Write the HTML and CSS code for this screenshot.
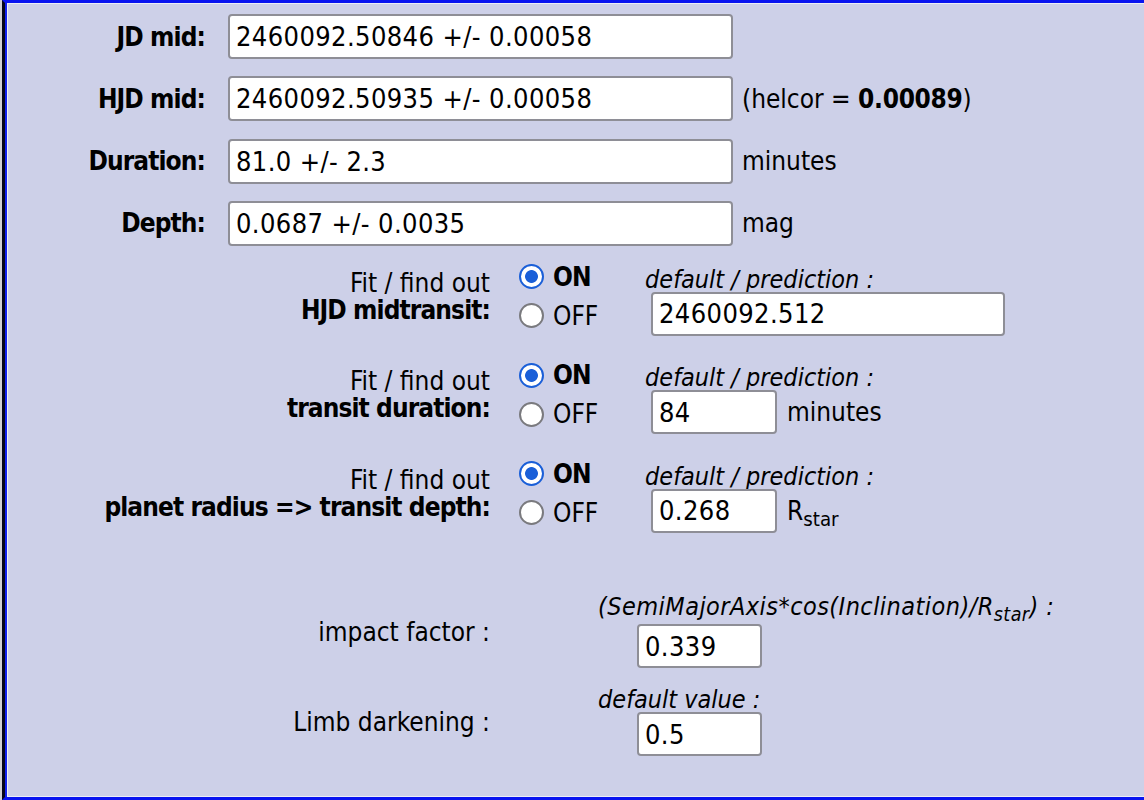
FILE: index.html
```html
<!DOCTYPE html>
<html>
<head>
<meta charset="utf-8">
<title>Transit fit</title>
<link rel="stylesheet" href="styles.css">
</head>
<body>
<div class="frame">
  <div class="main-grid">
    <label class="lbl">JD mid:</label>
    <input class="inp wide" value="2460092.50846 +/- 0.00058">
    <span class="unit"></span>

    <label class="lbl">HJD mid:</label>
    <input class="inp wide" value="2460092.50935 +/- 0.00058">
    <span class="unit">(helcor = <b class="num">0.00089</b>)</span>

    <label class="lbl">Duration:</label>
    <input class="inp wide" value="81.0 +/- 2.3">
    <span class="unit">minutes</span>

    <label class="lbl">Depth:</label>
    <input class="inp wide" value="0.0687 +/- 0.0035">
    <span class="unit">mag</span>
  </div>

  <div class="fit-grid">
    <div class="fit-lbl">Fit / find out<br><b>HJD midtransit:</b></div>
    <div class="radios">
      <label class="opt"><input type="radio" name="f1" checked><b>ON</b></label>
      <label class="opt"><input type="radio" name="f1">OFF</label>
    </div>
    <div class="def">
      <div class="hint">default / prediction :</div>
      <div class="val"><input class="inp mid" value="2460092.512"></div>
    </div>

    <div class="fit-lbl">Fit / find out<br><b>transit duration:</b></div>
    <div class="radios">
      <label class="opt"><input type="radio" name="f2" checked><b>ON</b></label>
      <label class="opt"><input type="radio" name="f2">OFF</label>
    </div>
    <div class="def">
      <div class="hint">default / prediction :</div>
      <div class="val"><input class="inp small" value="84"><span class="vunit">minutes</span></div>
    </div>

    <div class="fit-lbl">Fit / find out<br><b>planet radius =&gt; transit depth:</b></div>
    <div class="radios">
      <label class="opt"><input type="radio" name="f3" checked><b>ON</b></label>
      <label class="opt"><input type="radio" name="f3">OFF</label>
    </div>
    <div class="def">
      <div class="hint">default / prediction :</div>
      <div class="val"><input class="inp small" value="0.268"><span class="vunit">R<sub>star</sub></span></div>
    </div>
  </div>

  <div class="extra-grid">
    <div class="x-lbl">impact factor :</div>
    <div class="x-cell">
      <div class="hint formula">(SemiMajorAxis*cos(Inclination)/R<sub>star</sub>) :</div>
      <input class="inp small indent" value="0.339">
    </div>

    <div class="x-lbl">Limb darkening :</div>
    <div class="x-cell">
      <div class="hint">default value :</div>
      <input class="inp small indent" value="0.5">
    </div>
  </div>
</div>
</body>
</html>
```

FILE: styles.css
```css
html, body {
  margin: 0;
  padding: 0;
}

body {
  background: #d0d0d4;
  font-family: "DejaVu Sans Condensed", "DejaVu Sans", sans-serif;
  font-size: 26px;
  color: #000;
  overflow: hidden;
}

.frame {
  box-sizing: border-box;
  height: 800px;
  margin-left: 2px;
  border-top: 3px solid #0a14f0;
  border-left: 3px solid #05051a;
  border-bottom: 3px solid #0a14f0;
  background: #cdd0e8;
  box-shadow: inset 2px 0 0 #1020f0, inset 3px 1px 0 #eceef6, inset 0 -1px 0 #eceef6;
  padding: 11px 0 0 3px;
}

b {
  font-weight: bold;
  letter-spacing: -0.9px;
}

.inp {
  box-sizing: border-box;
  height: 44px;
  margin: 0;
  padding: 0 6px;
  border: 2px solid #8e8e96;
  border-radius: 4px;
  background: #fff;
  font-family: inherit;
  font-size: 27px;
  letter-spacing: 0.4px;
  color: #000;
  outline: none;
}

.wide { width: 505px; height: 45px; }
.mid { width: 354px; }
.small { width: 126px; }

/* top block */
.main-grid {
  display: grid;
  grid-template-columns: 220px 505px auto;
  row-gap: 17.3px;
  align-items: center;
}

.lbl {
  text-align: right;
  padding-right: 23px;
  font-weight: bold;
  letter-spacing: -0.9px;
}

.unit {
  padding-left: 9px;
  white-space: nowrap;
}

.num { letter-spacing: -0.3px; }

/* fit block */
.fit-grid {
  margin-top: 11.5px;
  display: grid;
  grid-template-columns: 510px 127px auto;
  row-gap: 20px;
  align-items: start;
}

.fit-lbl {
  text-align: right;
  padding-right: 28px;
  line-height: 27px;
  margin-top: 12.5px;
}

.radios {
  display: flex;
  flex-direction: column;
}

.opt {
  height: 39px;
  display: flex;
  align-items: center;
}

.opt input {
  appearance: none;
  -webkit-appearance: none;
  box-sizing: border-box;
  width: 25px;
  height: 25px;
  margin: 0 9px 0 1px;
  border: 2px solid #7a7a7e;
  border-radius: 50%;
  background: #fff;
}

.opt input:checked {
  border: 2.5px solid #1a5fd8;
  background: radial-gradient(circle, #1a5fd8 0 6px, #fff 6.8px);
}

.def {
  margin-top: 10.5px;
}

.hint {
  font-style: italic;
  font-size: 25px;
  line-height: 24px;
  white-space: nowrap;
}

.val {
  display: flex;
  align-items: center;
  padding-left: 6px;
}

.vunit {
  padding-left: 10px;
}

sub {
  font-size: 0.78em;
  line-height: 0;
  vertical-align: -0.3em;
}

/* extra block */
.extra-grid {
  margin-top: 62.5px;
  display: grid;
  grid-template-columns: 590px auto;
  row-gap: 20px;
  align-items: center;
}

.x-lbl {
  text-align: right;
  padding-right: 108px;
}

.x-cell {
  display: flex;
  flex-direction: column;
  align-items: flex-start;
}

.formula {
  padding-bottom: 5px;
  letter-spacing: 0.45px;
}

.indent {
  margin-left: 39px;
  width: 125px;
}
```
